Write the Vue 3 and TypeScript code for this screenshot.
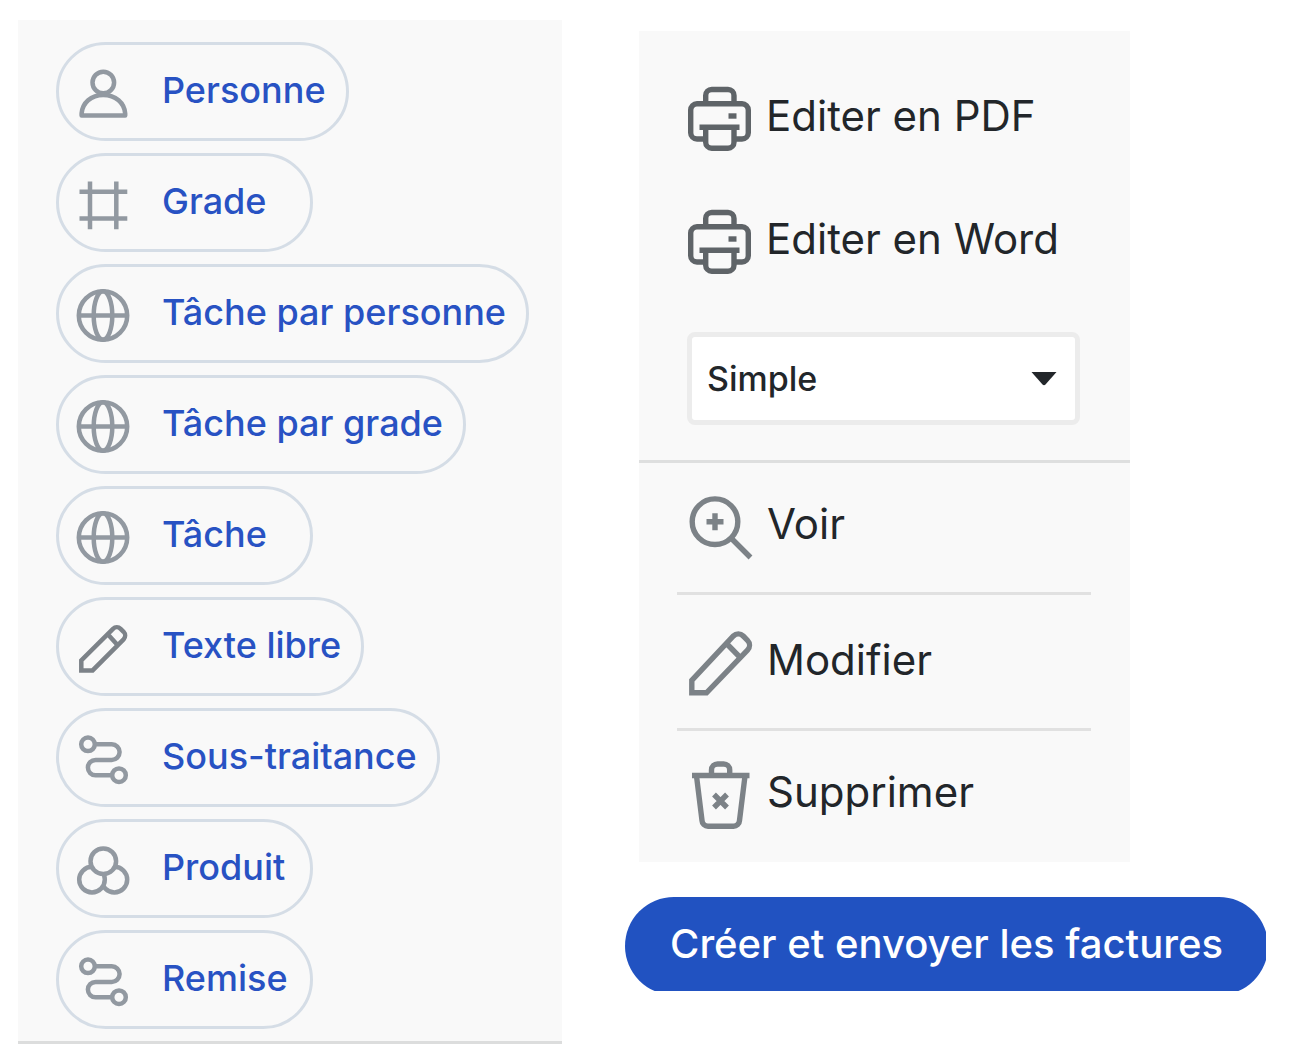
<script setup lang="ts">
import { ref } from 'vue'

type ChipIcon = 'person' | 'frame' | 'globe' | 'pencil' | 'route' | 'circles'

interface Chip {
  label: string
  icon: ChipIcon
}

const chips: Chip[] = [
  { label: 'Personne', icon: 'person' },
  { label: 'Grade', icon: 'frame' },
  { label: 'Tâche par personne', icon: 'globe' },
  { label: 'Tâche par grade', icon: 'globe' },
  { label: 'Tâche', icon: 'globe' },
  { label: 'Texte libre', icon: 'pencil' },
  { label: 'Sous-traitance', icon: 'route' },
  { label: 'Produit', icon: 'circles' },
  { label: 'Remise', icon: 'route' },
]

const exportsList: string[] = ['Editer en PDF', 'Editer en Word']
const model = ref<string>('Simple')
</script>

<template>
  <main class="page">
    <section class="panel chips">
      <button v-for="chip in chips" :key="chip.label" type="button" class="chip">
        <svg class="chip-icon" :class="chip.icon" viewBox="0 0 54 54" aria-hidden="true">
          <template v-if="chip.icon === 'person'">
            <circle cx="27.3" cy="15.5" r="10.8" />
            <path d="M5.6 46.5C6.4 36 15 28 27.3 28S48.4 36 49.2 46.5V48.5H5.6Z" />
          </template>
          <path
            v-else-if="chip.icon === 'frame'"
            d="M14 3.5V51.3M40.3 3.5V51.3M3.5 13.8H51.3M3.5 40.6H51.3"
          />
          <template v-else-if="chip.icon === 'globe'">
            <circle cx="27" cy="26.5" r="24.2" />
            <ellipse cx="27" cy="26.5" rx="9.3" ry="24.2" />
            <path d="M3 26.5H51" />
          </template>
          <path
            v-else-if="chip.icon === 'pencil'"
            d="M5.3 48.4V38.5L37 6.8a5.5 5.5 0 0 1 7.6 0L47.6 9.8a5.5 5.5 0 0 1 0 7.6L16.6 48.4ZM32 12.5L41.5 23"
          />
          <template v-else-if="chip.icon === 'route'">
            <circle cx="12" cy="11.3" r="6.8" />
            <circle cx="43" cy="42.2" r="6.8" />
            <path d="M19 11.3H35.8a7.8 7.8 0 0 1 0 15.6H19.6a7.7 7.7 0 0 0 0 15.4H36" />
          </template>
          <template v-else>
            <circle cx="38.4" cy="35.6" r="12.8" />
            <circle cx="16" cy="35.6" r="12.8" />
            <circle cx="27.3" cy="17.2" r="12.8" />
          </template>
        </svg>
        <span class="chip-label">{{ chip.label }}</span>
      </button>
    </section>

    <div class="side">
      <section class="panel menu">
        <div class="exports">
          <button v-for="label in exportsList" :key="label" type="button" class="action">
            <svg class="action-icon dark" viewBox="0 0 66 66" aria-hidden="true">
              <path d="M18.7 17.7V9.5a6 6 0 0 1 6-6H41a6 6 0 0 1 6 6V17.7" />
              <path
                d="M18.7 53H10a6.3 6.3 0 0 1-6.3-6.3V24A6.3 6.3 0 0 1 10 17.7H55A6.3 6.3 0 0 1 61.3 24V46.7A6.3 6.3 0 0 1 55 53H47"
              />
              <path d="M12.5 41.3H52.5M18.7 41.3V56.2a6 6 0 0 0 6 6H41a6 6 0 0 0 6-6V41.3" />
              <path d="M41.5 30H49.5" />
            </svg>
            <span class="action-label">{{ label }}</span>
          </button>
          <div class="select-box">
            <select v-model="model" class="select" aria-label="Modèle">
              <option>Simple</option>
            </select>
            <svg class="caret" viewBox="0 0 26 14" aria-hidden="true">
              <path d="M0.5 0H25.5L14.5 12.4Q13 14 11.5 12.4Z" />
            </svg>
          </div>
        </div>

        <ul class="actions">
          <li class="row">
            <button type="button" class="action">
              <svg class="action-icon" viewBox="0 0 66 66" aria-hidden="true">
                <circle cx="27" cy="27.7" r="22.8" />
                <path d="M43.5 44.5L62.5 63.5M27 19.2V36.2M18.5 27.7H35.5" />
              </svg>
              <span class="action-label">Voir</span>
            </button>
          </li>
          <li class="row tall">
            <button type="button" class="action">
              <svg class="action-icon" viewBox="0 0 66 66" aria-hidden="true">
                <path
                  d="M3.8 62.8V50.3L45.4 6a7 7 0 0 1 9.8 0L59.5 10.3a7 7 0 0 1 0 9.8L18.5 62.8ZM38.5 13.5L52.2 27.5"
                />
              </svg>
              <span class="action-label">Modifier</span>
            </button>
          </li>
          <li class="row">
            <button type="button" class="action">
              <svg class="action-icon" viewBox="0 1 66 66" aria-hidden="true">
                <path d="M4 14.5H61.5M23.5 14.5V9a6 6 0 0 1 6-6H35.7a6 6 0 0 1 6 6V14.5" />
                <path d="M8.5 15L14 59.5A6 6 0 0 0 20 65.2H45.5A6 6 0 0 0 51.5 59.5L57 15" />
                <path d="M26 33.5L39 46.5M39 33.5L26 46.5" />
              </svg>
              <span class="action-label">Supprimer</span>
            </button>
          </li>
        </ul>
      </section>

      <div class="submit-frame">
        <button type="button" class="submit">Créer et envoyer les factures</button>
      </div>
    </div>
  </main>
</template>

<style>
body {
  background: #ffffff;
}
</style>

<style scoped>
.page {
  display: grid;
  grid-template-columns: minmax(0, 544fr) minmax(0, 641fr);
  column-gap: 63px;
  align-items: start;
  padding: 20px 28px 20px 18px;
  font-family: Inter, 'Liberation Sans', sans-serif;
}

button {
  margin: 0;
  font-family: inherit;
  cursor: pointer;
}

.panel {
  background: #f9f9f9;
}

.chips {
  display: flex;
  flex-direction: column;
  align-items: flex-start;
  gap: 12px;
  padding: 22px 24px 12px 38px;
  border-bottom: 3px solid #dcdddd;
}

.chip {
  display: flex;
  align-items: flex-start;
  box-sizing: border-box;
  min-width: 257px;
  height: 99px;
  padding: 0 20px 0 17px;
  border: 3px solid #d5dde6;
  border-radius: 50px;
  background: transparent;
  color: #2852c3;
}

.chip-icon {
  flex: none;
  width: 54px;
  height: 54px;
  margin: 22px 32px 0 0;
  fill: none;
  stroke: #9299a1;
  stroke-width: 4.5;
  stroke-linejoin: round;
}

.chip-icon.pencil {
  stroke: #7c8288;
  stroke-linejoin: miter;
}

.chip-icon.circles {
  fill: #f9f9f9;
}

.chip-label {
  font-size: 36px;
  font-weight: 450;
  line-height: 91px;
  white-space: nowrap;
}

.side {
  padding-top: 11px;
}

.menu {
  margin: 0 136px 35px 14px;
  padding-bottom: 2px;
}

.exports {
  display: flex;
  flex-direction: column;
  gap: 57px;
  padding: 55px 50px 35px 48px;
  border-bottom: 3px solid #dedfdf;
}

.action {
  display: flex;
  align-items: flex-start;
  gap: 13px;
  padding: 0;
  border: 0;
  background: transparent;
  color: #22262a;
}

.action-icon {
  flex: none;
  width: 66px;
  height: 66px;
  overflow: visible;
  fill: none;
  stroke: #7c8287;
  stroke-width: 5.4;
}

.action-icon.dark {
  stroke: #5f6468;
}

.action-label {
  font-size: 42px;
  line-height: 60px;
  white-space: nowrap;
}

.select-box {
  position: relative;
}

.select {
  display: block;
  box-sizing: border-box;
  width: 100%;
  height: 93px;
  padding: 0 60px 0 15px;
  border: 5px solid #ececec;
  border-radius: 8px;
  appearance: none;
  background: #ffffff;
  color: #22262a;
  font-family: inherit;
  font-size: 34px;
  font-weight: 450;
}

.caret {
  position: absolute;
  top: 40px;
  right: 23px;
  width: 26px;
  height: 14px;
  fill: #22262a;
  pointer-events: none;
}

.actions {
  margin: 0;
  padding: 0 39px 0 38px;
  list-style: none;
}

.row {
  padding: 31px 0 32px 11px;
}

.row + .row {
  border-top: 3px solid #e1e1e1;
}

.row.tall {
  padding-top: 35px;
}

/* The pill is slightly larger than the frame that crops it. */
.submit-frame {
  height: 94px;
  overflow: hidden;
}

.submit {
  width: calc(100% + 2px);
  height: 98px;
  padding: 0 0 6px;
  border: 0;
  border-radius: 49px;
  background: #2152c1;
  color: #ffffff;
  font-size: 40px;
  font-weight: 450;
  white-space: nowrap;
}
</style>
